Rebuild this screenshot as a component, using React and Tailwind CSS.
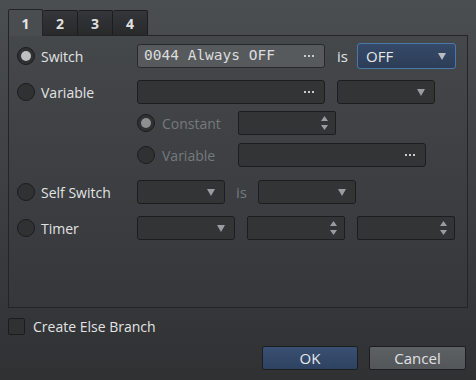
import React from "react";

// small drawn bits
const TriDown = ({ className = "", w = 9, h = 7 }) => (
  <svg width={w} height={h} viewBox={`0 0 ${w} ${h}`} className={className}>
    <path d={`M0 0 H${w} L${w / 2} ${h} Z`} fill="currentColor" />
  </svg>
);

const TriUp = ({ className = "", w = 9, h = 7 }) => (
  <svg width={w} height={h} viewBox={`0 0 ${w} ${h}`} className={className}>
    <path d={`M0 ${h} H${w} L${w / 2} 0 Z`} fill="currentColor" />
  </svg>
);

const Dots = () => (
  <div className="flex gap-[2px] mr-[10px]">
    <div className="w-[2px] h-[2px] bg-[#c9cbcd]" />
    <div className="w-[2px] h-[2px] bg-[#c9cbcd]" />
    <div className="w-[2px] h-[2px] bg-[#c9cbcd]" />
  </div>
);

const Radio = ({ checked = false, dim = false }) => (
  <div className="w-[18px] h-[18px] rounded-full bg-[#2f3133] border border-[#1b1c1e] flex items-center justify-center shrink-0">
    {checked && (
      <div
        className={
          "w-[10px] h-[10px] rounded-full " +
          (dim ? "bg-[#8d8f91]" : "bg-[#bdbfc1]")
        }
      />
    )}
  </div>
);

const Field = ({ w, light = false, children }) => (
  <div
    className={
      "h-[24px] rounded-[3px] border flex items-center justify-between shrink-0 " +
      (light
        ? "bg-[#575a5d] border-[#27292b]"
        : "bg-[#323436] border-[#1c1d1f]") +
      " " +
      w
    }
  >
    <span className="pl-[6px] font-['DejaVu_Sans_Mono',monospace] text-[14.5px] text-[#dcdcdc]">
      {children}
    </span>
    <Dots />
  </div>
);

const Select = ({ w }) => (
  <div
    className={
      "h-[24px] rounded-[3px] border border-[#1c1d1f] bg-[#323436] flex items-center justify-end shrink-0 " +
      w
    }
  >
    <TriDown className="mr-[9px] text-[#9a9da0]" w={8} h={7} />
  </div>
);

const Spin = ({ w }) => (
  <div
    className={
      "h-[24px] rounded-[2px] border border-[#1c1d1f] bg-[#323436] flex items-center justify-end shrink-0 " +
      w
    }
  >
    <div className="flex flex-col gap-[4px] mr-[7px]">
      <TriUp className="text-[#9a9da0]" w={7} h={5} />
      <TriDown className="text-[#9a9da0]" w={7} h={5} />
    </div>
  </div>
);

const App = () => {
  const label = "text-[14px] text-[#e2e3e4]";
  const dimLabel = "text-[14px] text-[#76797c]";

  return (
    <div className="w-[476px] h-[380px] bg-gradient-to-b from-[#4b4e51] to-[#2f3133] pt-[9px] px-[8px] font-['Open_Sans','Noto_Sans',sans-serif] overflow-hidden">
      {/* Tabs */}
      <div className="flex h-[26px] items-end">
        <div className="relative z-10 -mb-px w-[35px] h-[27px] bg-[#4a4d50] border border-b-0 border-[#222426] rounded-t-[2px] flex items-center justify-center text-[14px] font-bold text-[#e6e6e6]">
          1
        </div>
        {["2", "3", "4"].map((t) => (
          <div
            key={t}
            className="w-[35px] h-[25px] bg-gradient-to-b from-[#34363a] to-[#27292b] border border-l-0 border-b-0 border-[#1c1d1f] rounded-t-[2px] flex items-center justify-center text-[14px] font-bold text-[#e0e0e0]"
          >
            {t}
          </div>
        ))}
      </div>

      {/* Panel */}
      <div className="h-[273px] border border-[#222426] bg-gradient-to-b from-[#45484b] to-[#35373a] pl-[8px]">
        {/* Switch */}
        <div className="flex items-center h-[26px] mt-[7px]">
          <Radio checked />
          <span className={label + " w-[96px] ml-[6px]"}>Switch</span>
          <Field w="w-[188px]" light>
            0044 Always OFF
          </Field>
          <span className={label + " ml-[12px] w-[20px] text-[15px]"}>is</span>
          <div className="h-[26px] w-[99px] rounded-[3px] border border-[#4b78ab] bg-gradient-to-b from-[#354a69] to-[#2c3d57] flex items-center justify-between">
            <span className="pl-[8px] text-[15px] text-[#e6e8ea]">OFF</span>
            <TriDown className="mr-[9px] text-[#b9bcc0]" w={8} h={7} />
          </div>
        </div>

        {/* Variable */}
        <div className="flex items-center h-[26px] mt-[10px]">
          <Radio />
          <span className={label + " w-[96px] ml-[6px]"}>Variable</span>
          <Field w="w-[188px]" />
          <div className="ml-[12px]">
            <Select w="w-[98px]" />
          </div>
        </div>

        {/* Constant */}
        <div className="flex items-center h-[26px] mt-[5px] pl-[120px]">
          <Radio checked dim />
          <span className={dimLabel + " w-[76px] ml-[7px]"}>Constant</span>
          <Spin w="w-[98px]" />
        </div>

        {/* Variable (sub) */}
        <div className="flex items-center h-[26px] mt-[6px] pl-[120px]">
          <Radio />
          <span className={dimLabel + " w-[76px] ml-[7px]"}>Variable</span>
          <Field w="w-[188px]" />
        </div>

        {/* Self Switch */}
        <div className="flex items-center h-[26px] mt-[11px]">
          <Radio />
          <span className={label + " w-[96px] ml-[6px]"}>Self Switch</span>
          <Select w="w-[88px]" />
          <span className={dimLabel + " ml-[11px] w-[22px] text-[15px]"}>is</span>
          <Select w="w-[98px]" />
        </div>

        {/* Timer */}
        <div className="flex items-center h-[26px] mt-[10px]">
          <Radio />
          <span className={label + " w-[96px] ml-[6px]"}>Timer</span>
          <Select w="w-[98px]" />
          <div className="ml-[12px]">
            <Spin w="w-[98px]" />
          </div>
          <div className="ml-[12px]">
            <Spin w="w-[98px]" />
          </div>
        </div>
      </div>

      {/* Else branch */}
      <div className="flex items-center h-[17px] mt-[10px]">
        <div className="w-[17px] h-[17px] rounded-[2px] bg-[#2f3133] border border-[#1b1c1e]" />
        <span className={label + " ml-[8px]"}>Create Else Branch</span>
      </div>

      {/* Buttons */}
      <div className="flex justify-end gap-[11px] mt-[11px] mr-[2px]">
        <button className="w-[96px] h-[24px] rounded-[2px] border border-[#1c1d1f] bg-gradient-to-b from-[#3a5072] to-[#2e4260] text-[15px] text-[#e6e8ea]">
          OK
        </button>
        <button className="w-[97px] h-[24px] rounded-[2px] border border-[#1c1d1f] bg-gradient-to-b from-[#5e6164] to-[#535659] text-[15px] text-[#e0e1e2]">
          Cancel
        </button>
      </div>
    </div>
  );
};

export default App;
